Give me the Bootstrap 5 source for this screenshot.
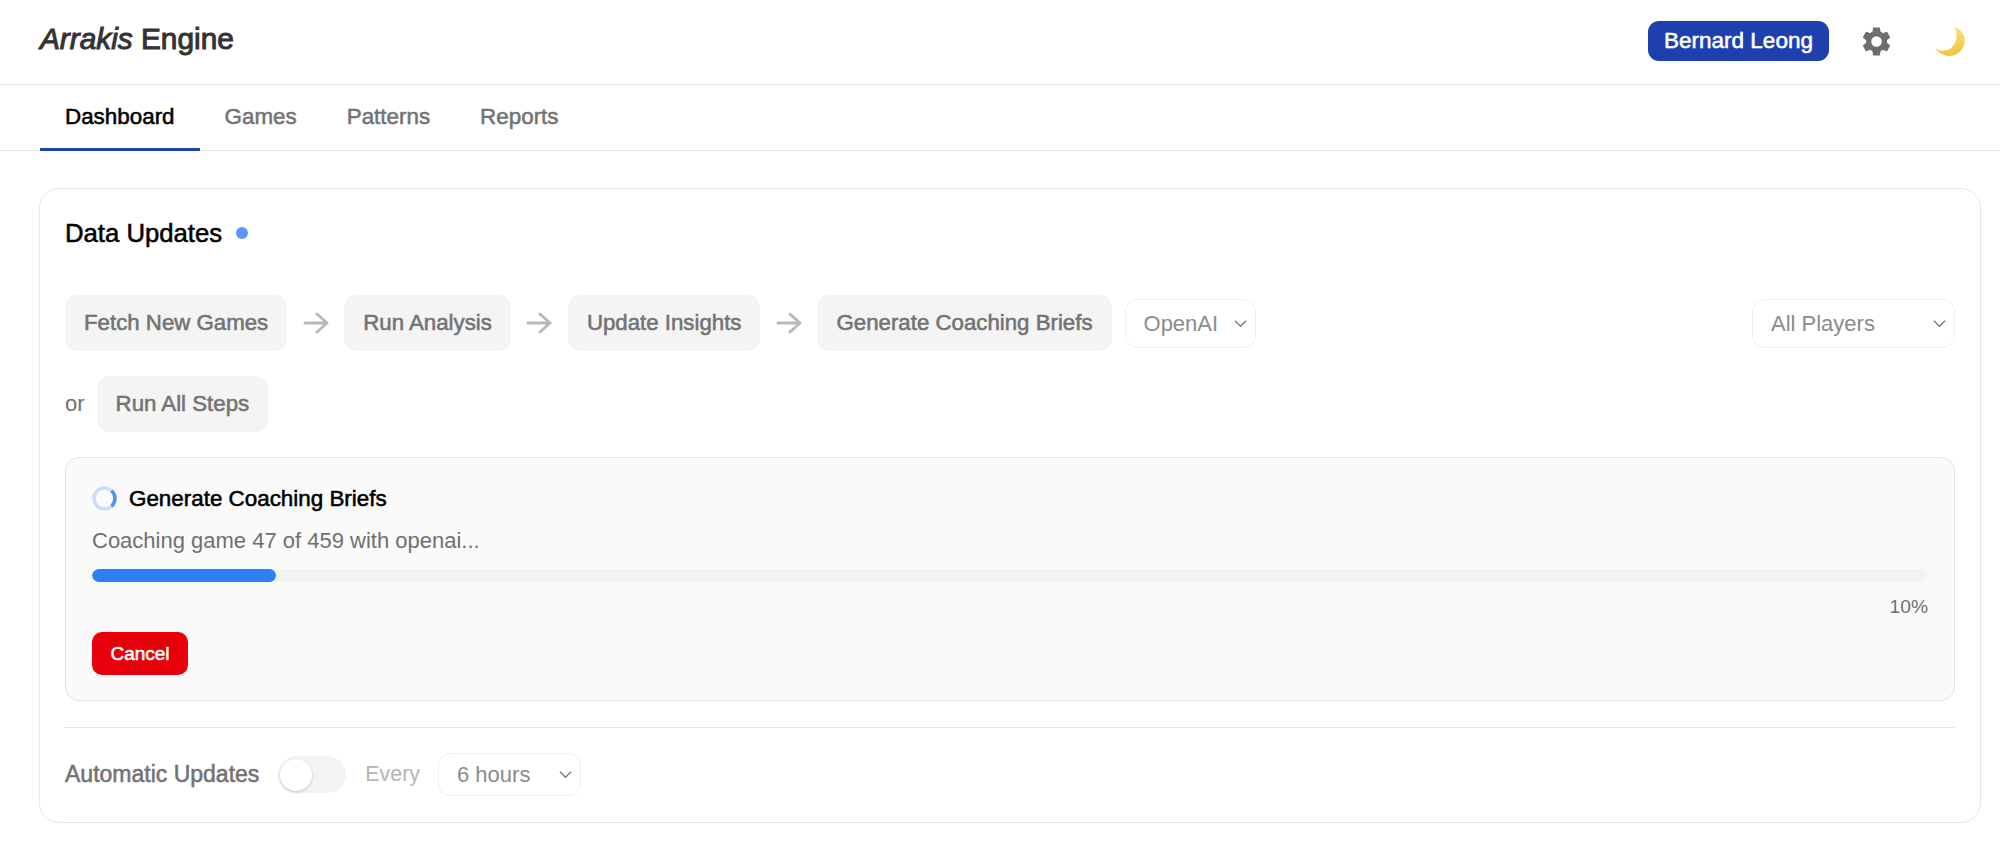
<!DOCTYPE html>
<html lang="en">
<head>
<meta charset="utf-8">
<title>Arrakis Engine</title>
<link rel="stylesheet" href="https://cdn.jsdelivr.net/npm/bootstrap@5.3.0/dist/css/bootstrap.min.css">
<style>
html,body{height:850px;overflow:hidden}
body{font-family:"Liberation Sans",Arial,sans-serif;background:#fff;color:#6b6b6b;font-size:22px}
.medium{font-weight:400;-webkit-text-stroke:.55px currentColor}
.app-top{height:85px;padding:0 31px 0 40px;border-bottom:1px solid #e5e5e5}
.app-name{font-size:29.8px;font-weight:400;-webkit-text-stroke:1px currentColor;color:#333;margin:-6px 0 0;line-height:1}
.top-actions{padding-bottom:2px}
.user-btn{background:#1e40af;border:0;color:#fff;height:40px;width:181px;padding:0;border-radius:11px;font-size:22.5px}
.user-btn:hover{background:#1e40af;color:#fff}
.icon-gear{width:35px;height:35px;fill:#6e6e6e;margin-left:30px}
.icon-moon{width:33px;height:33px;margin-left:39px;margin-right:3px}
.app-tabs{height:66px;padding-left:40px;border-bottom:1px solid #e8e8e8}
.app-tabs .nav-link{height:66px;padding:1px 25px 0;font-size:22.4px;color:#737373;display:flex;align-items:center;border-bottom:3px solid transparent;border-radius:0}
.app-tabs .nav-link.active{color:#000;border-bottom-color:#1e40af}
.update-box{margin:37px 19px 0 39px;height:635px;border:1px solid #e8e8e8;border-radius:20px;padding:0 25px;--bs-card-bg:#fff}
.box-head{height:88px;margin:0;color:#000;font-size:25.7px;gap:14px}
.pulse-dot{width:12px;height:12px;border-radius:50%;background:#5b95f9}
.step-row{gap:15.5px;height:56px;margin-top:18px}
.step-btn{height:56px;background:#f4f4f4;border:0;color:#737373;border-radius:12px;padding:0 19px;font-size:22.25px;white-space:nowrap}
.step-btn:hover{background:#f4f4f4;color:#737373}
.step-arrow{width:26px;height:24px;stroke:#b9b9b9;fill:none;stroke-width:3;stroke-linecap:round;stroke-linejoin:round;flex:none}
.plain-sel{height:49px;border:1px solid #f0f0f0;border-radius:12px;color:#8b8b8b;font-size:22px;padding:0 30px 0 18px;background-image:url("data:image/svg+xml,%3Csvg xmlns='http://www.w3.org/2000/svg' viewBox='0 0 14 9'%3E%3Cpath d='M1 1.5l6 6 6-6' fill='none' stroke='%23777' stroke-width='1.3'/%3E%3C/svg%3E");background-size:13px 9px;background-position:right 8px center}
.sel-ai{width:131px;margin-left:-2.5px}
.sel-players{width:203px;margin-left:auto}
.or-row{margin-top:25px;height:55px;gap:12px;font-size:22px;color:#6f6f6f}
.run-panel{margin-top:26px;height:244px;border:1px solid #e3e3e3;border-radius:14px;background:#fafafa;padding:0 26px}
.panel-head{height:81px;gap:12px;color:#000;font-size:22.4px}
.spin-ring{width:25px;height:25px;flex:none}
.status-line{font-size:22px;line-height:24px;margin:-10px 0 0;color:#707070}
.job-bar{height:13px;margin-top:16px;border-radius:7px;background:#f3f3f3}
.job-bar .progress-bar{background:#2f80f6;border-radius:7px}
.job-pct{font-size:19.2px;line-height:20px;margin-top:15px;color:#6f6f6f;text-align:right}
.stop-btn{display:block;width:96px;height:43px;margin-top:15px;padding:1px 0 0;background:#e7000b;border:0;border-radius:10px;color:#fff;font-size:19px}
.stop-btn:hover{background:#e7000b;color:#fff}
.box-rule{margin:26px 0 0;border:0;border-top:1px solid #e6e6e6;opacity:1}
.auto-row{height:93px}
.auto-label{font-size:23px;color:#737373;margin-right:19px}
.auto-row .form-switch{padding:0;margin:0;min-height:0}
.auto-row .form-switch .form-check-input{width:68px;height:37px;margin:0;border:0;border-radius:19px;background-color:#f3f3f3;background-image:none;float:none;box-shadow:none}
.switch-wrap{position:relative;width:68px;height:37px}
.switch-wrap i{position:absolute;left:2px;top:3px;width:32px;height:32px;border-radius:50%;background:#fff;box-shadow:0 1px 3px rgba(0,0,0,.2);pointer-events:none}
.every-txt{color:#b5b5b5;font-size:21.4px;margin:0 18px 0 19px}
.sel-hours{width:143px;height:43px}
</style>
</head>
<body>
<header class="app-top d-flex align-items-center">
  <h1 class="app-name"><em>Arrakis</em> Engine</h1>
  <div class="ms-auto d-flex align-items-center top-actions">
    <button class="btn user-btn medium" type="button">Bernard Leong</button>
    <svg class="icon-gear" viewBox="0 0 24 24" aria-hidden="true"><path d="M19.14 12.94c.04-.3.06-.61.06-.94s-.02-.64-.07-.94l2.03-1.58a.49.49 0 0 0 .12-.61l-1.92-3.32a.49.49 0 0 0-.59-.22l-2.39.96a7 7 0 0 0-1.62-.94l-.36-2.54a.48.48 0 0 0-.48-.41h-3.84a.48.48 0 0 0-.47.41l-.36 2.54c-.59.24-1.13.57-1.62.94l-2.39-.96a.49.49 0 0 0-.59.22L2.74 8.87a.48.48 0 0 0 .12.61l2.03 1.58c-.05.3-.09.63-.09.94s.02.64.07.94l-2.03 1.58a.49.49 0 0 0-.12.61l1.92 3.32c.12.22.37.29.59.22l2.39-.96c.5.38 1.03.7 1.62.94l.36 2.54c.05.24.24.41.48.41h3.84c.24 0 .44-.17.47-.41l.36-2.54c.59-.24 1.13-.56 1.62-.94l2.39.96c.22.08.47 0 .59-.22l1.92-3.32a.48.48 0 0 0-.12-.61l-2.01-1.58zM12 15.6A3.6 3.6 0 1 1 12 8.4a3.6 3.6 0 0 1 0 7.2z"/></svg>
    <svg class="icon-moon" viewBox="0 0 30 30" aria-hidden="true"><defs><linearGradient id="mg" x1="0" y1="0" x2="0.3" y2="1"><stop offset="0" stop-color="#fce98a"/><stop offset="1" stop-color="#f3c544"/></linearGradient></defs><path d="M19.5 1.5C27 4 30 11 28.3 17.5 26.3 25.5 18 30 10.5 27.6 6.5 26.3 3.5 23.6 2 20.6c3.5 2.8 8.5 3.6 12.8 1.4C21 18.9 23.5 9.5 19.5 1.5z" fill="url(#mg)"/></svg>
  </div>
</header>
<nav class="nav app-tabs">
  <a class="nav-link active medium" href="#">Dashboard</a>
  <a class="nav-link medium" href="#">Games</a>
  <a class="nav-link medium" href="#">Patterns</a>
  <a class="nav-link medium" href="#">Reports</a>
</nav>
<section class="card update-box">
  <h2 class="box-head d-flex align-items-center medium">Data Updates <span class="pulse-dot"></span></h2>
  <div class="d-flex align-items-center step-row">
    <button class="btn step-btn medium" type="button">Fetch New Games</button>
    <svg class="step-arrow" viewBox="0 0 26 24"><path d="M2 12h22M14 3l10 9-10 9"/></svg>
    <button class="btn step-btn medium" type="button">Run Analysis</button>
    <svg class="step-arrow" viewBox="0 0 26 24"><path d="M2 12h22M14 3l10 9-10 9"/></svg>
    <button class="btn step-btn medium" type="button">Update Insights</button>
    <svg class="step-arrow" viewBox="0 0 26 24"><path d="M2 12h22M14 3l10 9-10 9"/></svg>
    <button class="btn step-btn medium" type="button">Generate Coaching Briefs</button>
    <select class="form-select plain-sel sel-ai"><option>OpenAI</option></select>
    <select class="form-select plain-sel sel-players"><option>All Players</option></select>
  </div>
  <div class="d-flex align-items-center or-row">
    <span>or</span>
    <button class="btn step-btn medium" type="button">Run All Steps</button>
  </div>
  <div class="run-panel">
    <div class="d-flex align-items-center panel-head medium">
      <svg class="spin-ring" viewBox="0 0 25 25" aria-hidden="true"><circle cx="12.5" cy="12.5" r="10.5" fill="none" stroke="#c9defc" stroke-width="3.5"/><path d="M19.5 4.7A10.5 10.5 0 0 1 19.5 20.3" fill="none" stroke="#4f93f8" stroke-width="3.5"/></svg>
      Generate Coaching Briefs
    </div>
    <p class="status-line">Coaching game 47 of 459 with openai...</p>
    <div class="progress job-bar"><div class="progress-bar" style="width:10%"></div></div>
    <div class="job-pct">10%</div>
    <button class="btn stop-btn medium" type="button">Cancel</button>
  </div>
  <hr class="box-rule">
  <div class="d-flex align-items-center auto-row">
    <span class="auto-label medium">Automatic Updates</span>
    <div class="switch-wrap form-check form-switch"><input class="form-check-input" type="checkbox" role="switch" aria-label="Automatic Updates"><i></i></div>
    <span class="every-txt">Every</span>
    <select class="form-select plain-sel sel-hours"><option>6 hours</option></select>
  </div>
</section>
</body>
</html>
